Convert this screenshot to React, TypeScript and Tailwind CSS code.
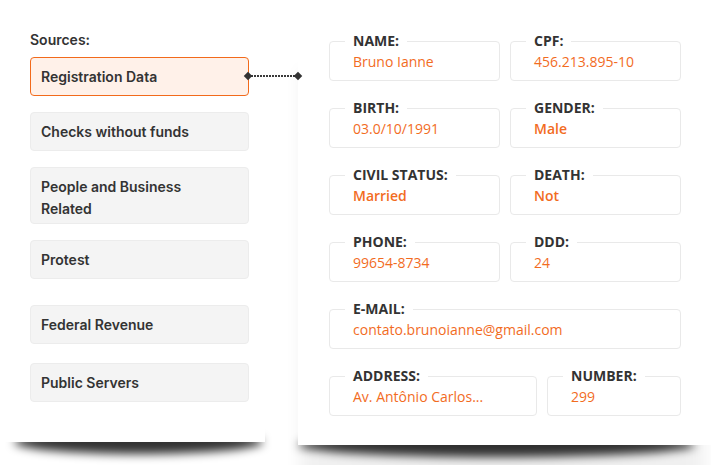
import React from 'react';

type Source = { name: string; active?: boolean; tall?: boolean; mt: string };

const sources: Source[] = [
  { name: 'Registration Data', active: true, mt: 'mt-[7px]' },
  { name: 'Checks without funds', mt: 'mt-[16px]' },
  { name: 'People and Business Related', tall: true, mt: 'mt-[16px]' },
  { name: 'Protest', mt: 'mt-[16px]' },
  { name: 'Federal Revenue', mt: 'mt-[26px]' },
  { name: 'Public Servers', mt: 'mt-[19px]' },
];

type Field = { label: string; value: string; bold?: boolean };

const rows: Field[][] = [
  [
    { label: 'NAME:', value: 'Bruno Ianne' },
    { label: 'CPF:', value: '456.213.895-10' },
  ],
  [
    { label: 'BIRTH:', value: '03.0/10/1991' },
    { label: 'GENDER:', value: 'Male', bold: true },
  ],
  [
    { label: 'CIVIL STATUS:', value: 'Married', bold: true },
    { label: 'DEATH:', value: 'Not', bold: true },
  ],
  [
    { label: 'PHONE:', value: '99654-8734' },
    { label: 'DDD:', value: '24' },
  ],
];

const FieldBox = ({ label, value, bold }: Field) => (
  <fieldset className="border border-[#e9e9e9] rounded-[4px] p-0 pb-[8px] min-w-0">
    <legend className="ml-[15px] px-2 text-[14px] leading-[16px] font-bold text-[#333]">
      {label}
    </legend>
    <div
      className={`pt-[3px] pl-[23px] pr-3 text-[14px] leading-[20px] text-[#f26c1f] truncate ${bold ? 'font-semibold' : 'font-normal'}`}
    >
      {value}
    </div>
  </fieldset>
);

const Connector = () => (
  <svg width="62" height="12" viewBox="0 0 62 12" className="absolute left-[242px] top-[70px] z-20">
    <line x1="6" y1="6" x2="57" y2="6" stroke="#3a3a3a" strokeWidth="2" strokeDasharray="2 1" />
    <rect x="3" y="3" width="6" height="6" fill="#333" transform="rotate(45 6 6)" />
    <rect x="53" y="3" width="6" height="6" fill="#333" transform="rotate(45 56 6)" />
  </svg>
);

export default function App() {
  return (
    <div className="relative w-[711px] h-[465px] bg-white overflow-hidden flex items-start font-['Open_Sans',sans-serif]">
      <Connector />

      {/* sources */}
      <div className="w-[265px] flex flex-col">
        <div className="relative z-10 h-[442px] bg-white pl-[30px] pr-[16px] pt-[30px] flex flex-col font-['Inter',sans-serif] text-[#333]">
          <div className="text-[14px] leading-[20px] font-semibold">Sources:</div>
          {sources.map((s) => (
            <div
              key={s.name}
              className={`${s.mt} ${s.tall ? 'h-[57px] pt-[8px] leading-[22px]' : 'h-[39px] flex items-center leading-[20px]'} rounded-[4px] border px-[10px] text-[14px] font-semibold ${
                s.active ? 'bg-[#fff1e9] border-[#f26a1b]' : 'bg-[#f4f4f4] border-[#ececec]'
              }`}
            >
              {s.name === 'People and Business Related' ? (
                <>
                  People and Business
                  <br />
                  Related
                </>
              ) : (
                s.name
              )}
            </div>
          ))}
        </div>
        <div className="-mt-[12px] ml-[14px] mr-[2px] h-[24px] rounded-[50%] bg-black/80 blur-[5px]" />
      </div>

      {/* registration data */}
      <div className="ml-[33px] mr-[-12px] flex-1 flex flex-col">
        <div className="relative z-10 h-[445px] bg-white pl-[31px] pr-[42px] pt-[33px] flex flex-col gap-[19px] shadow-[-8px_60px_16px_-10px_rgba(0,0,0,0.06)]">
          {rows.map((row, i) => (
            <div key={i} className="grid grid-cols-2 gap-[10px]">
              {row.map((f) => (
                <FieldBox key={f.label} {...f} />
              ))}
            </div>
          ))}
          <FieldBox label="E-MAIL:" value="contato.brunoianne@gmail.com" />
          <div className="grid grid-cols-[208px_1fr] gap-[10px]">
            <FieldBox label="ADDRESS:" value="Av. Antônio Carlos..." />
            <FieldBox label="NUMBER:" value="299" />
          </div>
        </div>
        <div className="-mt-[12px] ml-[0px] mr-[28px] h-[24px] rounded-[50%] bg-black/80 blur-[5px]" />
      </div>
    </div>
  );
}
